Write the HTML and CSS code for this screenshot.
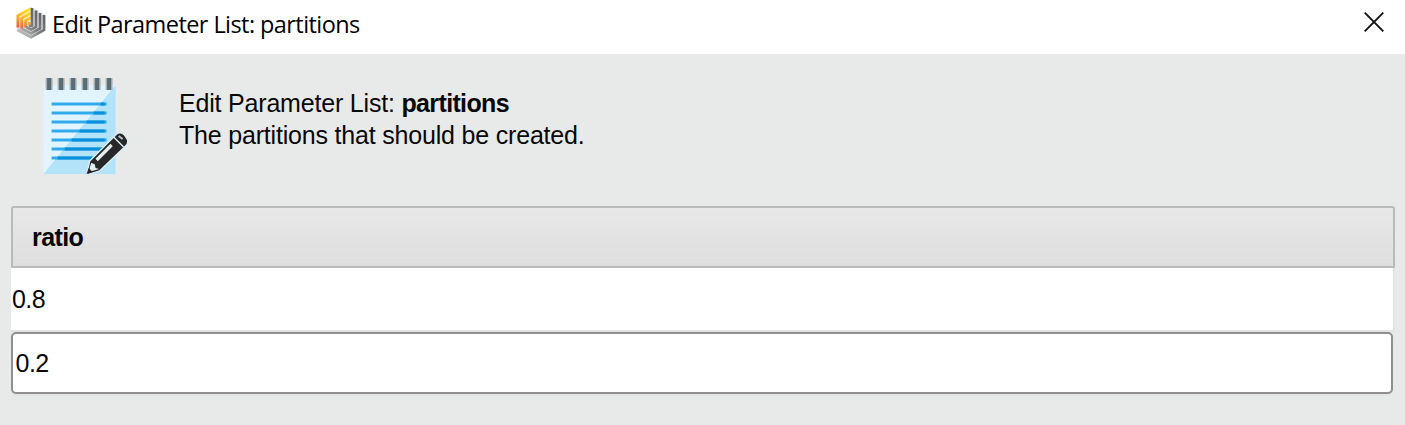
FILE: index.html
```html
<!DOCTYPE html>
<html lang="en">
<head>
<meta charset="utf-8">
<title>Edit Parameter List: partitions</title>
<link rel="stylesheet" href="styles.css">
</head>
<body>
<div class="dialog">
  <header class="titlebar">
    <svg class="logo" width="30" height="32" viewBox="0 0 30 32">
      <defs>
        <linearGradient id="warm" gradientUnits="userSpaceOnUse" x1="13" y1="3" x2="3" y2="21"><stop offset="0" stop-color="#fbe62a"/><stop offset=".5" stop-color="#fbb42d"/><stop offset="1" stop-color="#ee5a34"/></linearGradient>
        <linearGradient id="grey" gradientUnits="userSpaceOnUse" x1="22" y1="10" x2="8" y2="28"><stop offset="0" stop-color="#67686c"/><stop offset=".5" stop-color="#7c7d80"/><stop offset="1" stop-color="#b9babb"/></linearGradient>
      </defs>
      <path fill="#fff3c4" d="M15 0 .5 8V20L15 16Z"/>
      <path fill="#e3e3e4" d="M15 0 29.500 8V23.500L15 32 .5 23.500V20L15 16Z"/>
      <g fill="none" stroke="url(#warm)" stroke-width="2.900">
        <path d="M2 20.500V8.500L15 1.500"/>
        <path d="M5.800 22V11L15 6"/>
        <path d="M9.600 20.500V13.500L15 10.500"/>
        <path d="M13 18V15"/>
      </g>
      <g fill="none" stroke="url(#grey)" stroke-width="2.700">
        <path d="M28 8V23L15 30.300 1.500 23"/>
        <path d="M24 6V21.500L15 26.500 5 21.500"/>
        <path d="M20 3.500V20L15 22.800 10 20"/>
        <path d="M16 1V18.500L13 19.500"/>
      </g>
    </svg>
    <h1 class="title">Edit Parameter List: partitions</h1>
    <svg class="close" width="20" height="20" viewBox="0 0 20 20"><path d="M.7.700 19.300 19.300M19.300.700.7 19.300" stroke="#111" stroke-width="1.900"/></svg>
  </header>
  <section class="intro">
    <svg class="notepad" width="86" height="98" viewBox="0.4 0 86 98">
      <path fill="#e1f4ff" d="M1 8H73V97H1Z"/>
      <path fill="#b3e3f9" d="M73 8V97H1Z"/>
      <path stroke="#2fabed" stroke-width="3" d="M9 27H64M9 36H64M9 45H64M9 54H64M9 63H64M9 72H64M9 81H50"/>
      <path stroke="#078fdc" stroke-width="3" d="M58 27H62M51 36H62M44 45H62M37 54H62M29 63H62M22 72H60M15 81H50"/>
      <path fill="#a3b0b6" d="M3 1h7v12H3zM15 1h7v12h-7zM27 1h7v12h-7zM39 1h7v12h-7zM51 1h7v12h-7zM63 1h7v12h-7z"/>
      <path fill="#596c75" d="M4.500 1h4v12h-4zM16.500 1h4v12h-4zM28.500 1h4v12h-4zM40.500 1h4v12h-4zM52.500 1h4v12h-4zM64.500 1h4v12h-4z"/>
      <path fill="#272727" stroke="#d7edf5" stroke-width="1.500" d="M44 98 47 84 74 57Q78 54 82 58L84 61Q87 65 83 69L57 94Z"/>
      <path fill="#e4edf0" d="M46 95 48.500 86 52 87 53 91 56.500 92Z"/>
      <path fill="#272727" d="m44 97 2-6 4 4Z"/>
      <path stroke="#e4edf0" stroke-width="3.200" d="M54 83 69 68"/>
      <path stroke="#d7edf5" stroke-width="1.500" d="M71 60 81 70"/>
      <path stroke="#bdc5c8" stroke-width="2" d="M76 59 80 62"/>
    </svg>
    <p class="description">Edit Parameter List: <b>partitions</b><br><span class="detail">The partitions that should be created.</span></p>
  </section>
  <main class="table">
    <div class="heading">ratio</div>
    <div class="row">0.8</div>
    <div class="editor">0.2</div>
  </main>
</div>
</body>
</html>
```
FILE: styles.css
```css
* { box-sizing: border-box; }
body { margin: 0; background: #e8eae9; color: #080808; font-family: "Liberation Sans", Arial, sans-serif; font-size: 25px; }
.dialog { height: 425px; overflow: hidden; }
.titlebar { display: flex; height: 54px; padding: 7px 21px 0 16px; background: #fff; }
.logo { flex: none; }
.title { margin: 0 0 0 6px; font: 400 23.5px/34px "Open Sans", "Noto Sans", sans-serif; letter-spacing: -0.57px; color: #000; white-space: nowrap; }
.close { margin: 5px 0 0 auto; }
.intro { display: flex; height: 152px; padding: 23px 0 0 43px; }
.notepad { flex: none; }
.description { margin: 10px 0 0 50px; line-height: 32px; letter-spacing: -0.19px; white-space: nowrap; }
.description b { letter-spacing: -0.65px; }
.table { width: 1384px; margin-left: 11px; }
.heading { height: 62px; padding-left: 19px; border: 2px solid #b9bbba; border-radius: 3px 3px 0 0; background: linear-gradient(#e7e8e7, #dedede); font-weight: 700; line-height: 59px; letter-spacing: -0.6px; }
.row { width: 1384px; height: 64px; padding-left: 1px; border-right: 2px solid #e3e3e3; border-bottom: 2px solid #e3e3e3; background: #fff; line-height: 63px; letter-spacing: -0.6px; }
.editor { width: 1382px; height: 62px; padding-left: 2.500px; border: 2px solid #8f8f8f; border-radius: 5px; background: #fff; line-height: 59px; letter-spacing: -0.5px; box-shadow: 0 2px #e3e3e3; }
```
